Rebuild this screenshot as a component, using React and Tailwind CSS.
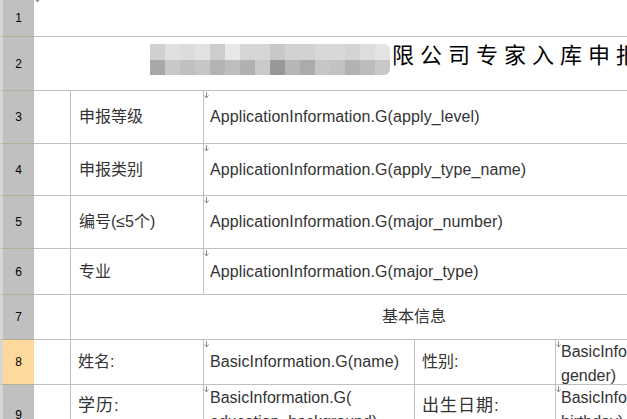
import React from "react";

const mosaicTop = [
  "bg-[#d0d0d0]", "bg-[#e0e0e0]", "bg-[#dcdcdc]", "bg-[#e2e2e2]",
  "bg-[#cdcdcd]", "bg-[#e8e8e8]", "bg-[#d6d6d6]", "bg-[#d6d6d6]",
  "bg-[#c8c8c8]", "bg-[#d2d2d2]", "bg-[#d2d2d2]", "bg-[#d8d8d8]",
  "bg-[#d8d8d8]", "bg-[#d4d4d4]", "bg-[#dedede]", "bg-[#e4e4e4]",
];
const mosaicBottom = [
  "bg-[#a8a8a8]", "bg-[#c8c8c8]", "bg-[#c0c0c0]", "bg-[#c6c6c6]",
  "bg-[#b4b4b4]", "bg-[#bebebe]", "bg-[#b0b0b0]", "bg-[#cacaca]",
  "bg-[#989898]", "bg-[#b6b6b6]", "bg-[#ababab]", "bg-[#c6c6c6]",
  "bg-[#c2c2c2]", "bg-[#b2b2b2]", "bg-[#bcbcbc]", "bg-[#c8c8c8]",
];

function Arrow({ className = "" }) {
  return (
    <svg width="5" height="7" viewBox="0 0 5 7" className={`absolute ${className}`}>
      <path d="M2.5 0V6M0.5 3.5L2.5 6L4.5 3.5" stroke="#8c8c8c" fill="none" strokeWidth="1" />
    </svg>
  );
}

function Row({ n, h, active, children }) {
  return (
    <div className={`flex shrink-0 ${h}`}>
      <div
        className={`w-[34px] shrink-0 border-l-[3px] border-l-[#d6d6d6] border-b border-b-[#b4b09c] flex items-center justify-center text-[12px] text-black ${
          active ? "bg-[#fdd99b]" : "bg-[#c0c0c0]"
        }`}
      >
        {n}
      </div>
      <div className="flex flex-1 min-w-0 overflow-hidden border-b border-[#c0c0c0]">{children}</div>
    </div>
  );
}

function AppRow({ n, h, label, value }) {
  return (
    <Row n={n} h={h}>
      <div className="w-[37px] shrink-0 border-r border-[#c0c0c0]" />
      <div className="w-[133px] shrink-0 border-r border-[#c0c0c0] flex items-center pl-[8px] text-[16px]">
        {label}
      </div>
      <div className="relative flex-1 flex items-center pl-[6px] text-[16px] tracking-[0.1px] whitespace-nowrap">
        <Arrow className="left-[0px] top-[1px]" />
        {value}
      </div>
    </Row>
  );
}

export default function App() {
  return (
    <div className="w-[627px] h-[419px] overflow-hidden bg-white flex flex-col text-[#333] font-['Liberation_Sans','Noto_Sans_CJK_SC',sans-serif]">
      <Row n="1" h="h-[37px]">
        <div className="relative flex-1">
          <Arrow className="left-[1px] top-[-4px]" />
        </div>
      </Row>

      <Row n="2" h="h-[54px]">
        <div className="relative flex-1 overflow-visible">
          <div className="absolute left-[171px] top-[-1px] w-[58px] h-[3px] bg-white" />
          <div className="pl-[330px] pt-[5px] leading-[22px] text-[22px] tracking-[6px] text-black whitespace-nowrap font-['Noto_Sans_CJK_SC',sans-serif]">
            有限公司专家入库申报表
          </div>
          <div className="absolute left-[116px] top-[7px] flex flex-col rounded-r-[6px] overflow-hidden">
            <div className="flex h-[16px]">
              {mosaicTop.map((c, i) => (
                <div key={i} className={`w-[15px] ${c}`} />
              ))}
            </div>
            <div className="flex h-[15px]">
              {mosaicBottom.map((c, i) => (
                <div key={i} className={`w-[15px] ${c}`} />
              ))}
            </div>
          </div>
        </div>
      </Row>

      <AppRow n="3" h="h-[53px]" label="申报等级" value="ApplicationInformation.G(apply_level)" />
      <AppRow n="4" h="h-[52px]" label="申报类别" value="ApplicationInformation.G(apply_type_name)" />
      <AppRow n="5" h="h-[53px]" label="编号(≤5个)" value="ApplicationInformation.G(major_number)" />
      <AppRow n="6" h="h-[46px]" label="专业" value="ApplicationInformation.G(major_type)" />

      <Row n="7" h="h-[45px]">
        <div className="w-[37px] shrink-0 border-r border-[#c0c0c0]" />
        <div className="w-[686px] shrink-0 flex items-center justify-center text-[16px]">基本信息</div>
      </Row>

      <Row n="8" h="h-[45px]" active>
        <div className="w-[37px] shrink-0 border-r border-[#c0c0c0]" />
        <div className="w-[133px] shrink-0 border-r border-[#c0c0c0] flex items-center pl-[7px] text-[16px]">
          姓名:
        </div>
        <div className="relative w-[211px] shrink-0 border-r border-[#c0c0c0] flex items-center pl-[6px] text-[16px] tracking-[0.1px] whitespace-nowrap">
          <Arrow className="left-[0px] top-[1px]" />
          BasicInformation.G(name)
        </div>
        <div className="w-[141px] shrink-0 border-r border-[#c0c0c0] flex items-center pl-[7px] text-[16px]">
          性别:
        </div>
        <div className="relative flex-1 pl-[5px] text-[16px] leading-[24px] whitespace-nowrap overflow-hidden">
          <Arrow className="left-[0px] top-[1px]" />
          BasicInformation.G(
          <br />
          gender)
        </div>
      </Row>

      <Row n="9" h="h-[60px]">
        <div className="w-[37px] shrink-0 border-r border-[#c0c0c0]" />
        <div className="w-[133px] shrink-0 border-r border-[#c0c0c0] pl-[7px] pt-[9px] leading-[24px] text-[17px] tracking-[1px]">
          学历:
        </div>
        <div className="relative w-[211px] shrink-0 border-r border-[#c0c0c0] pl-[6px] pt-[1px] text-[16px] leading-[24px] whitespace-nowrap overflow-hidden">
          <Arrow className="left-[0px] top-[1px]" />
          BasicInformation.G(
          <br />
          education_background)
        </div>
        <div className="w-[141px] shrink-0 border-r border-[#c0c0c0] pl-[7px] pt-[9px] leading-[24px] text-[17px] tracking-[1px]">
          出生日期:
        </div>
        <div className="relative flex-1 pl-[5px] pt-[1px] text-[16px] leading-[24px] whitespace-nowrap overflow-hidden">
          <Arrow className="left-[0px] top-[1px]" />
          BasicInformation.G(
          <br />
          birthday)
        </div>
      </Row>
    </div>
  );
}
